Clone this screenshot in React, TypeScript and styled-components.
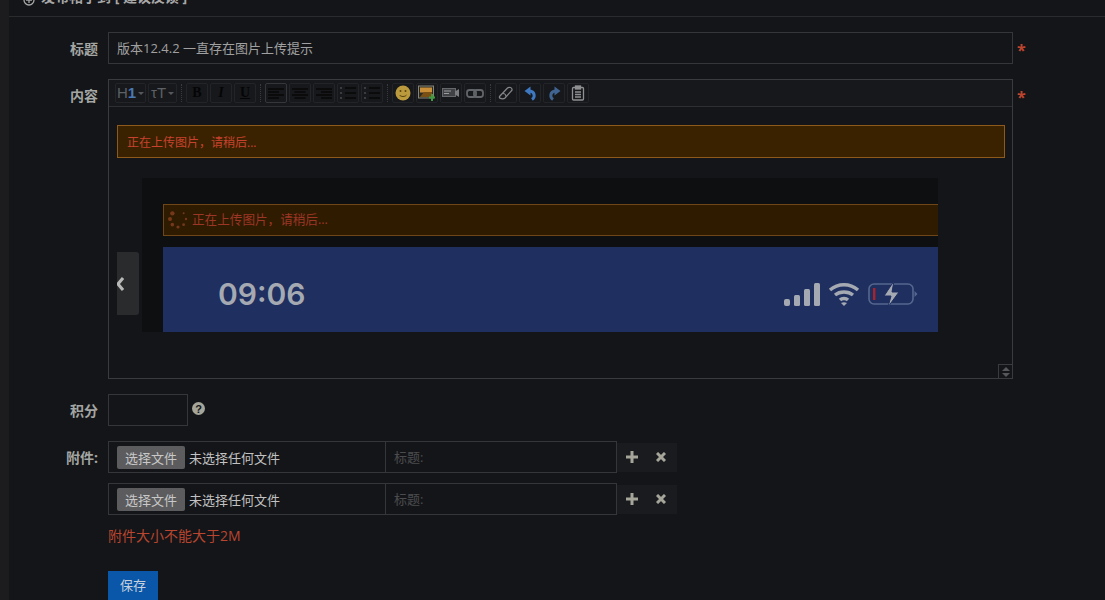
import React from 'react';
import styled, { createGlobalStyle } from 'styled-components';

const GlobalStyle = createGlobalStyle`
  html, body {
    margin: 0;
    padding: 0;
    background: #141518;
    overflow: hidden;
  }
  * { box-sizing: border-box; }
`;

const Page = styled.div`
  display: flex;
  width: 1105px;
  height: 600px;
  overflow: hidden;
  background: #141518;
  font-family: "Open Sans", "Noto Sans CJK SC", sans-serif;
  font-size: 13px;
  color: #b0b0b0;
`;

const SideStrip = styled.div`
  width: 9px;
  flex: none;
  background: #1c1c1e;
`;

const Main = styled.div`
  flex: 1;
  display: flex;
  flex-direction: column;
`;

const Header = styled.div`
  height: 17px;
  flex: none;
  display: flex;
  align-items: flex-end;
  gap: 6px;
  padding: 0 0 10px 14px;
  border-bottom: 1px solid #2a2b2d;
  font-size: 14px;
  font-weight: 700;
  line-height: 18px;
  color: #a8a8a8;
  white-space: nowrap;
`;

const Form = styled.div`
  display: flex;
  flex-direction: column;
  padding-top: 15px;
`;

const Row = styled.div<{ $gap: number }>`
  display: flex;
  align-items: flex-start;
  margin-bottom: ${(p) => p.$gap}px;
`;

const Label = styled.div`
  width: 89px;
  flex: none;
  margin-right: 10px;
  padding-top: 8px;
  text-align: right;
  font-size: 14px;
  font-weight: 700;
  line-height: 18px;
  color: #a3a6a3;
`;

const TitleInput = styled.div`
  width: 905px;
  height: 32px;
  padding-left: 8px;
  border: 1px solid #35363a;
  font-size: 13px;
  line-height: 30px;
  color: #a0a0a0;
`;

const Star = styled.span`
  margin-left: 4px;
  padding-top: 9px;
  font-size: 16px;
  font-weight: 700;
  line-height: 18px;
  color: #bd452f;
`;

const Editor = styled.div`
  position: relative;
  width: 905px;
  height: 300px;
  display: flex;
  flex-direction: column;
  border: 1px solid #3a3b3e;
`;

const Toolbar = styled.div`
  height: 27px;
  flex: none;
  display: flex;
  align-items: center;
  gap: 2px;
  padding: 0 0 0 6px;
  border-bottom: 1px solid #2e2f32;
  background: #17181b;
`;

const ToolButton = styled.div<{ $w?: number; $active?: boolean }>`
  width: ${(p) => p.$w ?? 22}px;
  height: 20px;
  flex: none;
  display: flex;
  align-items: center;
  justify-content: center;
  border: 1px solid ${(p) => (p.$active ? '#35363a' : '#232427')};
  border-radius: 2px;
`;

const HeadingGlyph = styled.span`
  font-family: "Liberation Sans", sans-serif;
  font-size: 15px;
  line-height: 18px;
  color: #5d6064;
`;

const HeadingNumber = styled.span`
  font-weight: 700;
  color: #4a78b5;
`;

const StyleGlyph = styled.span<{ $italic?: boolean; $under?: boolean }>`
  font-family: "Liberation Serif", serif;
  font-size: 14px;
  font-weight: 700;
  font-style: ${(p) => (p.$italic ? 'italic' : 'normal')};
  text-decoration: ${(p) => (p.$under ? 'underline' : 'none')};
  color: #050506;
`;

const ToolSep = styled.div`
  width: 1px;
  height: 18px;
  margin: 0 2px;
  flex: none;
  border-left: 1px dotted #3a3b3e;
`;

const Caret = styled.span`
  width: 0;
  height: 0;
  margin-left: 2px;
  border-left: 3px solid transparent;
  border-right: 3px solid transparent;
  border-top: 3px solid #55575a;
`;

const EditorBody = styled.div`
  flex: 1;
  display: flex;
  flex-direction: column;
  padding: 18px 7px 0 8px;
`;

const Notice = styled.div`
  height: 33px;
  display: flex;
  align-items: center;
  padding-left: 9px;
  border: 1px solid #8d5a1c;
  background: #3a2200;
  color: #c8432f;
  font-size: 12px;
`;

const ShotFrame = styled.div`
  width: 796px;
  height: 154px;
  margin: 20px 0 0 25px;
  padding: 26px 0 0 21px;
  background: #0d0f11;
`;

const ShotNotice = styled.div`
  height: 32px;
  display: flex;
  align-items: center;
  gap: 4px;
  padding: 0 0 3px 4px;
  border: 1px solid #6f4716;
  border-right: none;
  background: #2f1b00;
  color: #9c3626;
  font-size: 12.6px;
`;

const StatusBar = styled.div`
  height: 85px;
  margin-top: 11px;
  display: flex;
  align-items: center;
  justify-content: space-between;
  padding: 8px 20px 0 55px;
  background: #1e2f60;
`;

const ClockText = styled.span`
  font-family: Inter, "Liberation Sans", sans-serif;
  font-size: 30px;
  font-weight: 600;
  color: #a5a9b2;
`;

const StatusIcons = styled.div`
  display: flex;
  align-items: center;
  gap: 8px;
`;

const PrevArrow = styled.div`
  position: absolute;
  left: 8px;
  top: 172px;
  width: 22px;
  height: 63px;
  display: flex;
  align-items: center;
  border-radius: 0 3px 3px 0;
  background: #2a2b2d;
  overflow: hidden;
`;

const ResizeHandle = styled.div`
  position: absolute;
  right: 0;
  bottom: 0;
  width: 14px;
  height: 14px;
  display: flex;
  align-items: center;
  justify-content: center;
  border: 1px solid #3a3b3e;
  border-right: none;
  border-bottom: none;
`;

const PointsInput = styled.div`
  width: 80px;
  height: 32px;
  border: 1px solid #35363a;
`;

const Help = styled.div`
  width: 13px;
  height: 13px;
  margin: 8px 0 0 4px;
  display: flex;
  align-items: center;
  justify-content: center;
  border-radius: 50%;
  background: #a5a59a;
  color: #141518;
  font-family: "Liberation Sans", sans-serif;
  font-size: 11px;
  font-weight: 700;
`;

const AttachList = styled.div`
  display: flex;
  flex-direction: column;
  gap: 10px;
`;

const AttachRow = styled.div`
  display: flex;
  align-items: center;
`;

const AttachBox = styled.div`
  width: 509px;
  height: 32px;
  display: flex;
  border: 1px solid #35363a;
`;

const FileCell = styled.div`
  width: 277px;
  flex: none;
  display: flex;
  align-items: center;
  gap: 4px;
  padding-left: 8px;
  border-right: 1px solid #35363a;
  color: #c2c2c2;
  font-size: 13px;
`;

const FileButton = styled.div`
  width: 68px;
  height: 23px;
  display: flex;
  align-items: center;
  justify-content: center;
  border-radius: 2px;
  background: #5c5c5e;
  color: #c8c8c8;
`;

const CaptionCell = styled.div`
  flex: 1;
  padding-left: 8px;
  color: #4b4c4e;
  font-size: 13px;
  line-height: 30px;
`;

const ActionBox = styled.div`
  width: 60px;
  height: 29px;
  display: flex;
  align-items: center;
  justify-content: space-around;
  padding: 0 2px 0 0;
  background: #1a1b1e;
`;

const Warning = styled.div`
  margin: 11px 0 0 99px;
  font-size: 14px;
  line-height: 20px;
  color: #b8452f;
`;

const SaveButton = styled.div`
  width: 50px;
  height: 40px;
  margin: 25px 0 0 99px;
  padding-top: 6px;
  background: #0a56a8;
  color: #c5d0dc;
  font-size: 13px;
  line-height: 17px;
  text-align: center;
`;

const HeaderIcon = () => (
  <svg width="12" height="12" viewBox="0 0 12 12" fill="none" stroke="#a8a8a8" strokeWidth="1.3">
    <circle cx="6" cy="6" r="5" />
    <path d="M3 6h6M6 3v6" />
  </svg>
);

const Lines = ({ align }: { align: 'left' | 'center' | 'right' }) => {
  const widths = [16, 11, 16, 11];
  return (
    <svg width="18" height="13" viewBox="0 0 18 13" stroke="#050506" strokeWidth="1.3">
      {widths.map((w, i) => {
        const x = align === 'left' ? 1 : align === 'center' ? 9 - w / 2 : 17 - w;
        return <line key={i} x1={x} x2={x + w} y1={2 + i * 3} y2={2 + i * 3} />;
      })}
    </svg>
  );
};

const ListLines = () => (
  <svg width="18" height="14" viewBox="0 0 18 14">
    {[2, 7, 12].map((y) => (
      <g key={y}>
        <rect x="1" y={y - 1} width="2" height="2" fill="#3a3c3f" />
        <line x1="6" x2="17" y1={y} y2={y} stroke="#050506" strokeWidth="1.3" />
      </g>
    ))}
  </svg>
);

const Smile = () => (
  <svg width="16" height="16" viewBox="0 0 16 16">
    <circle cx="8" cy="8" r="7.5" fill="#bb9a3e" />
    <circle cx="5.5" cy="6" r="1" fill="#5a4510" />
    <circle cx="10.5" cy="6" r="1" fill="#5a4510" />
    <path d="M4.5 10c1.5 2 5.5 2 7 0" stroke="#5a4510" fill="none" strokeWidth="1" />
  </svg>
);

const ImageIcon = () => (
  <svg width="18" height="17" viewBox="0 0 18 17">
    <rect x="0.5" y="1" width="15" height="12" fill="#2a2a22" stroke="#85857a" />
    <rect x="2" y="2.5" width="12" height="5" fill="#c98f38" />
    <path d="M2 12l4-5h8v5z" fill="#7a4f14" />
    <path d="M14 9v7M11 12.5h6" stroke="#3f9a40" strokeWidth="2" />
  </svg>
);

const VideoIcon = () => (
  <svg width="18" height="12" viewBox="0 0 18 12">
    <rect x="0.5" y="1.5" width="13" height="8" fill="#3f4144" stroke="#66686b" />
    <path d="M13 4.5l4-2.5v8l-4-2.5z" fill="#7a7c80" />
    <path d="M2 4h7M2 6.5h5" stroke="#9a9ca0" />
  </svg>
);

const LinkIcon = () => (
  <svg width="18" height="11" viewBox="0 0 18 11" fill="none" stroke="#62656a" strokeWidth="1.8">
    <rect x="1" y="2" width="9" height="7" rx="2.5" />
    <rect x="8" y="2" width="9" height="7" rx="2.5" />
  </svg>
);

const EraserIcon = () => (
  <svg width="16" height="16" viewBox="0 0 16 16" fill="none" stroke="#85878a" strokeWidth="1.2">
    <path d="M1.5 11.5L9.5 3c1.4-1.4 5-.5 4.5 2.2L7 13c-1.5 1.4-6.5 1-5.5-1.5z" />
    <path d="M5 8.5c1.5 0 3 1.3 3 3" />
  </svg>
);

const UndoIcon = ({ flip }: { flip?: boolean }) => (
  <svg width="15" height="16" viewBox="0 0 15 16" style={flip ? { transform: 'scaleX(-1)' } : undefined}>
    <path d="M9 14.5c3-2 3.5-8-2.5-8.5" fill="none" stroke={flip ? '#3f6492' : '#3d78c0'} strokeWidth="3" />
    <path d="M7.5 1.5L1.5 6l6 4.5z" fill={flip ? '#3f6492' : '#3d78c0'} />
  </svg>
);

const PasteIcon = () => (
  <svg width="14" height="16" viewBox="0 0 14 16" fill="none" stroke="#8f9092" strokeWidth="1.3">
    <rect x="1.5" y="2.5" width="11" height="12.5" rx="1" />
    <rect x="4.5" y="1" width="5" height="3" fill="#8f9092" />
    <path d="M4 7h6M4 9.5h6M4 12h6" />
  </svg>
);

const Spinner = () => (
  <svg width="20" height="20" viewBox="0 0 20 20" fill="#75381a">
    {[0, 45, 90, 135, 180, 225, 270].map((deg, i) => {
      const a = (deg * Math.PI) / 180 - Math.PI / 4;
      return <circle key={deg} cx={10 + 8 * Math.cos(a)} cy={10 + 8 * Math.sin(a)} r={1 + i * 0.2} />;
    })}
  </svg>
);

const SignalIcon = () => (
  <svg width="36" height="24" viewBox="0 0 36 24" fill="#a5a9b2">
    <rect x="0" y="17" width="6" height="7" rx="2" />
    <rect x="10" y="13" width="6" height="11" rx="1.5" />
    <rect x="20" y="7" width="6" height="17" rx="1.5" />
    <rect x="30" y="1" width="6" height="23" rx="1.5" />
  </svg>
);

const WifiIcon = () => (
  <svg width="32" height="24" viewBox="0 0 32 24" fill="none" stroke="#a5a9b2" strokeWidth="3.4">
    <path d="M2 8c8-7 20-7 28 0" />
    <path d="M7 13c5-4 13-4 18 0" />
    <path d="M12 18c2-2 6-2 8 0" />
    <path d="M16 24l-3-3c2-1 4-1 6 0z" fill="#a5a9b2" stroke="none" />
  </svg>
);

const BatteryIcon = () => (
  <svg width="50" height="26" viewBox="0 0 50 26">
    <rect x="1" y="3" width="44" height="20" rx="5" fill="none" stroke="#56678f" strokeWidth="1.6" />
    <rect x="5" y="7" width="2.4" height="12" fill="#a8232c" />
    <path d="M46.5 10l3 3-3 3z" fill="#56678f" />
    <path d="M26 0L16 15h7l-3 11 11-15h-7z" fill="#a5a9b2" stroke="#1e2f60" strokeWidth="1" />
  </svg>
);

const ChevronLeft = () => (
  <svg width="7" height="16" viewBox="0 0 7 16" fill="none" stroke="#b8b8b8" strokeWidth="3">
    <path d="M6 2L1 8l5 6" />
  </svg>
);

const ResizeArrows = () => (
  <svg width="8" height="10" viewBox="0 0 8 10" fill="#55575a">
    <path d="M4 0l4 4H0zM4 10L0 6h8z" />
  </svg>
);

const PlusIcon = () => (
  <svg width="12" height="12" viewBox="0 0 12 12" fill="#a5a59a">
    <path d="M4.5 0h3v4.5H12v3H7.5V12h-3V7.5H0v-3h4.5z" />
  </svg>
);

const CrossIcon = () => (
  <svg width="10" height="10" viewBox="0 0 10 10" stroke="#a5a59a" strokeWidth="3">
    <path d="M1 1l8 8M9 1l-8 8" />
  </svg>
);

const attachments = [0, 1];

export default function App() {
  return (
    <>
      <GlobalStyle />
      <Page>
        <SideStrip />
        <Main>
          <Header>
            <HeaderIcon />
            发布帖子到 [ 建议反馈 ]
          </Header>
          <Form>
            <Row $gap={15}>
              <Label>标题</Label>
              <TitleInput>版本12.4.2 一直存在图片上传提示</TitleInput>
              <Star>*</Star>
            </Row>
            <Row $gap={15}>
              <Label>内容</Label>
              <Editor>
                <Toolbar>
                  <ToolButton $w={31}>
                    <HeadingGlyph>
                      H<HeadingNumber>1</HeadingNumber>
                    </HeadingGlyph>
                    <Caret />
                  </ToolButton>
                  <ToolButton $w={29}>
                    <HeadingGlyph>τT</HeadingGlyph>
                    <Caret />
                  </ToolButton>
                  <ToolSep />
                  <ToolButton>
                    <StyleGlyph>B</StyleGlyph>
                  </ToolButton>
                  <ToolButton>
                    <StyleGlyph $italic>I</StyleGlyph>
                  </ToolButton>
                  <ToolButton>
                    <StyleGlyph $under>U</StyleGlyph>
                  </ToolButton>
                  <ToolSep />
                  <ToolButton $active>
                    <Lines align="left" />
                  </ToolButton>
                  <ToolButton>
                    <Lines align="center" />
                  </ToolButton>
                  <ToolButton>
                    <Lines align="right" />
                  </ToolButton>
                  <ToolButton>
                    <ListLines />
                  </ToolButton>
                  <ToolButton>
                    <ListLines />
                  </ToolButton>
                  <ToolSep />
                  <ToolButton>
                    <Smile />
                  </ToolButton>
                  <ToolButton>
                    <ImageIcon />
                  </ToolButton>
                  <ToolButton>
                    <VideoIcon />
                  </ToolButton>
                  <ToolButton>
                    <LinkIcon />
                  </ToolButton>
                  <ToolSep />
                  <ToolButton>
                    <EraserIcon />
                  </ToolButton>
                  <ToolButton>
                    <UndoIcon />
                  </ToolButton>
                  <ToolButton>
                    <UndoIcon flip />
                  </ToolButton>
                  <ToolButton>
                    <PasteIcon />
                  </ToolButton>
                </Toolbar>
                <EditorBody>
                  <Notice>正在上传图片，请稍后...</Notice>
                  <ShotFrame>
                    <ShotNotice>
                      <Spinner />
                      正在上传图片，请稍后...
                    </ShotNotice>
                    <StatusBar>
                      <ClockText>09:06</ClockText>
                      <StatusIcons>
                        <SignalIcon />
                        <WifiIcon />
                        <BatteryIcon />
                      </StatusIcons>
                    </StatusBar>
                  </ShotFrame>
                </EditorBody>
                <PrevArrow>
                  <ChevronLeft />
                </PrevArrow>
                <ResizeHandle>
                  <ResizeArrows />
                </ResizeHandle>
              </Editor>
              <Star>*</Star>
            </Row>
            <Row $gap={15}>
              <Label>积分</Label>
              <PointsInput />
              <Help>?</Help>
            </Row>
            <Row $gap={0}>
              <Label>附件:</Label>
              <AttachList>
                {attachments.map((id) => (
                  <AttachRow key={id}>
                    <AttachBox>
                      <FileCell>
                        <FileButton>选择文件</FileButton>
                        未选择任何文件
                      </FileCell>
                      <CaptionCell>标题:</CaptionCell>
                    </AttachBox>
                    <ActionBox>
                      <PlusIcon />
                      <CrossIcon />
                    </ActionBox>
                  </AttachRow>
                ))}
              </AttachList>
            </Row>
            <Warning>附件大小不能大于2M</Warning>
            <SaveButton>保存</SaveButton>
          </Form>
        </Main>
      </Page>
    </>
  );
}
